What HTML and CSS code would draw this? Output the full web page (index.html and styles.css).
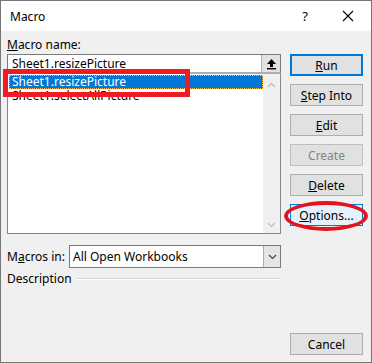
FILE: index.html
```html
<!DOCTYPE html>
<html lang="en">
<head>
    <meta charset="UTF-8">
    <title>Macro</title>
    <link rel="stylesheet" href="styles.css">
</head>
<body>
    <div class="window">
        <div class="titlebar">
            <span class="title">Macro</span>
            <span class="help">?</span>
            <svg class="close" width="12" height="12" viewBox="0 0 12 12"><path d="M1 1 L11 11 M11 1 L1 11" stroke="#000" stroke-width="1.1"/></svg>
        </div>
        <div class="content">
            <div class="left">
                <div class="label"><u>M</u>acro name:</div>
                <div class="name-input">
                    <span class="name-text">Sheet1.resizePicture</span>
                    <span class="up-btn">
                        <svg width="11" height="12" viewBox="0 0 11 12"><path d="M5.5 1 L10 6 L7 6 L7 9 L4 9 L4 6 L1 6 Z" fill="#000"/><rect x="1" y="10" width="9" height="1.4" fill="#000"/></svg>
                    </span>
                </div>
                <div class="list">
                    <div class="items">
                        <div class="item selected">Sheet1.resizePicture</div>
                        <div class="item">Sheet1.selectAllPicture</div>
                    </div>
                    <div class="scrollbar">
                        <svg width="9" height="6" viewBox="0 0 9 6"><path d="M1 5 L4.5 1.5 L8 5" fill="none" stroke="#c2c2c2" stroke-width="1.5"/></svg>
                        <svg width="9" height="6" viewBox="0 0 9 6"><path d="M1 1 L4.5 4.5 L8 1" fill="none" stroke="#c2c2c2" stroke-width="1.5"/></svg>
                    </div>
                    <div class="mark-rect"></div>
                </div>
                <div class="macros-in">
                    <span class="label">M<u>a</u>cros in:</span>
                    <div class="select">
                        <span class="select-text">All Open Workbooks</span>
                        <span class="drop-btn">
                            <svg width="9" height="6" viewBox="0 0 9 6"><path d="M1 1 L4.5 4.5 L8 1" fill="none" stroke="#444" stroke-width="1.2"/></svg>
                        </span>
                    </div>
                </div>
                <div class="description">
                    <span class="label">Description</span>
                    <span class="rule"></span>
                </div>
            </div>
            <div class="right">
                <div class="btn default"><u>R</u>un</div>
                <div class="btn"><u>S</u>tep Into</div>
                <div class="btn"><u>E</u>dit</div>
                <div class="btn disabled">Create</div>
                <div class="btn"><u>D</u>elete</div>
                <div class="btn focused"><u>O</u>ptions...
                    <div class="mark-ellipse"></div>
                </div>
                <div class="btn cancel">Cancel</div>
            </div>
        </div>
    </div>
</body>
</html>
```

FILE: styles.css
```css
body {
    margin: 0;
    font-family: 'Noto Sans', 'Segoe UI', sans-serif;
    font-size: 12px;
    color: #000;
    background: #f0f0f0;
}

u {
    text-decoration: underline;
    text-underline-offset: 1px;
}

.window {
    width: 372px;
    height: 363px;
    box-sizing: border-box;
    border: 1px solid #777;
    background: #f0f0f0;
    display: flex;
    flex-direction: column;
}

.titlebar {
    height: 30px;
    background: #fff;
    display: flex;
    align-items: center;
    padding-left: 9px;
    font-size: 12px;
}

.title {
    flex: 1;
}

.help {
    font-size: 13px;
    margin-right: 34px;
}

.close {
    margin-right: 17px;
}

.content {
    flex: 1;
    display: flex;
    padding: 6px 7px 7px 6px;
}

.left {
    width: 274px;
    display: flex;
    flex-direction: column;
}

.label {
    line-height: 16px;
    height: 16px;
    margin-bottom: 1px;
}

.name-input {
    height: 19px;
    box-sizing: border-box;
    border: 1px solid #7a7a7a;
    border-bottom-color: #adadad;
    background: #fff;
    display: flex;
    align-items: center;
}

.name-text {
    flex: 1;
    padding-left: 4px;
}

.up-btn {
    width: 19px;
    height: 17px;
    box-sizing: border-box;
    background: #e1e1e1;
    border-left: 1px solid #adadad;
    display: flex;
    align-items: center;
    justify-content: center;
}

.list {
    position: relative;
    height: 161px;
    box-sizing: border-box;
    border: 1px solid #828790;
    border-top: 1px solid #adadad;
    background: #fff;
    display: flex;
}

.items {
    flex: 1;
    padding: 1px 0 0 1px;
}

.item {
    height: 14px;
    line-height: 14px;
    padding-left: 3px;
}

.item.selected {
    background: #0078d7;
    color: #fff;
    outline: 1px dotted #f7b54a;
    outline-offset: -1px;
}

.scrollbar {
    width: 17px;
    background: #f0f0f0;
    display: flex;
    flex-direction: column;
    justify-content: space-between;
    align-items: center;
    padding: 8px 0 5px;
}

.mark-rect {
    position: absolute;
    left: -5px;
    top: -5px;
    width: 187px;
    height: 28px;
    box-sizing: border-box;
    border: 5px solid #ed1c24;
}

.macros-in {
    display: flex;
    align-items: center;
    margin-top: 11px;
}

.macros-in .label {
    width: 62px;
    margin: 0;
}

.select {
    flex: 1;
    height: 23px;
    box-sizing: border-box;
    border: 1px solid #7a7a7a;
    background: #fff;
    display: flex;
    align-items: center;
}

.select-text {
    flex: 1;
    padding-left: 3px;
}

.drop-btn {
    width: 17px;
    height: 21px;
    box-sizing: border-box;
    background: #e5e5e5;
    border-left: 1px solid #acacac;
    display: flex;
    align-items: center;
    justify-content: center;
}

.description {
    display: flex;
    align-items: center;
    margin-top: 3px;
}

.description .label {
    margin: 0;
}

.rule {
    flex: 1;
    margin-left: 4px;
    border-top: 1px solid #d5d5d5;
    border-bottom: 1px solid #fff;
}

.right {
    width: 73px;
    margin-left: 9px;
    padding-top: 17px;
    display: flex;
    flex-direction: column;
    gap: 8px;
}

.btn {
    position: relative;
    height: 22px;
    box-sizing: border-box;
    border: 1px solid #adadad;
    background: #e1e1e1;
    display: flex;
    align-items: center;
    justify-content: center;
}

.btn.default {
    border: 2px solid #0078d7;
}

.btn.disabled {
    color: #838383;
    border-color: #bfbfbf;
    background: #e1e1e1;
}

.btn.focused {
    border-color: #0078d7;
    background: #e5f1fb;
}

.mark-ellipse {
    position: absolute;
    left: -7px;
    top: -4px;
    width: 84px;
    height: 30px;
    box-sizing: border-box;
    border: 4px solid #e3141e;
    border-radius: 50%;
}

.btn.cancel {
    margin-top: auto;
}
```
